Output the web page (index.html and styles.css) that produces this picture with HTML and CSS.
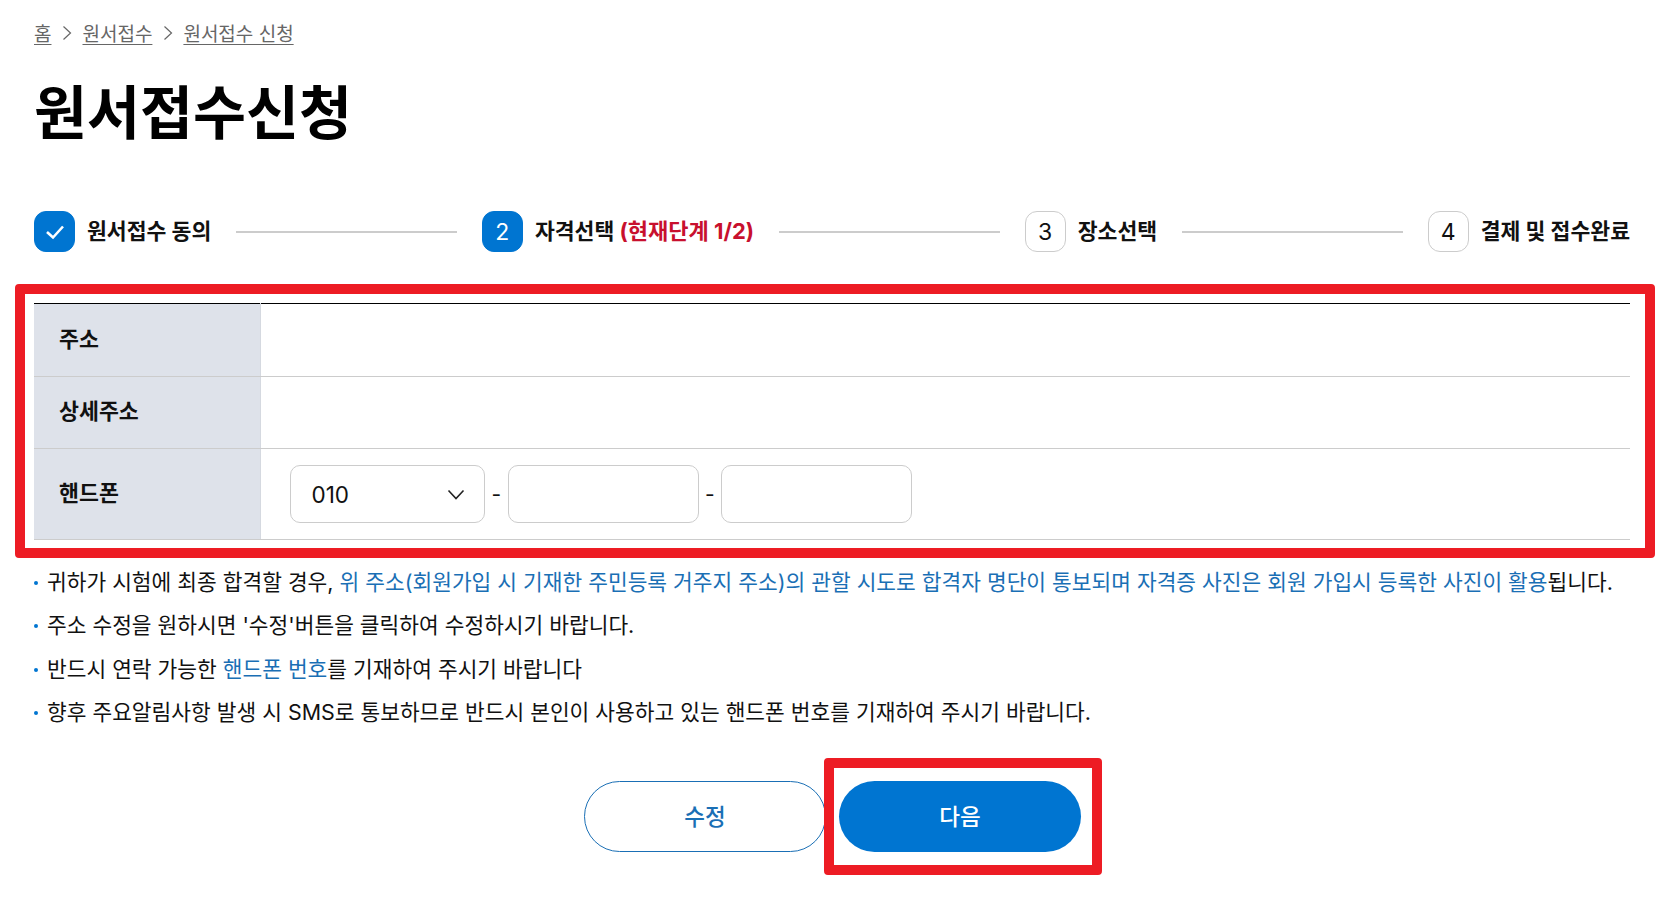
FILE: index.html
```html
<!DOCTYPE html>
<html lang="ko">
<head>
  <meta charset="UTF-8">
  <meta name="viewport" content="width=device-width, initial-scale=1.0">
  <title>원서접수신청</title>
  <link rel="stylesheet" href="styles.css">
</head>
<body>

  <div class="page">
    <!-- breadcrumb -->
    <nav class="breadcrumb">
      <a href="#">홈</a>
      <svg class="crumb-arrow" viewBox="0 0 10 16"><path d="M1.5 1.5 8.5 8 1.5 14.5"/></svg>
      <a href="#">원서접수</a>
      <svg class="crumb-arrow" viewBox="0 0 10 16"><path d="M1.5 1.5 8.5 8 1.5 14.5"/></svg>
      <a href="#">원서접수 신청</a>
    </nav>

    <h1>원서접수신청</h1>

    <!-- steps -->
    <div class="steps">
      <div class="step">
        <span class="step-num on">
          <svg viewBox="0 0 20 16"><path d="M2 8 8 13.5 18 2.5"/></svg>
        </span>
        <strong>원서접수 동의</strong>
      </div>
      <span class="step-line"></span>
      <div class="step">
        <span class="step-num on">2</span>
        <strong>자격선택 <em>(현재단계 1/2)</em></strong>
      </div>
      <span class="step-line"></span>
      <div class="step">
        <span class="step-num">3</span>
        <strong>장소선택</strong>
      </div>
      <span class="step-line"></span>
      <div class="step">
        <span class="step-num">4</span>
        <strong>결제 및 접수완료</strong>
      </div>
    </div>

    <!-- form table -->
    <table class="form-table">
      <tr class="row-addr">
        <th>주소</th>
        <td></td>
      </tr>
      <tr class="row-detail">
        <th>상세주소</th>
        <td></td>
      </tr>
      <tr class="row-phone">
        <th>핸드폰</th>
        <td>
          <div class="phone">
            <div class="select-wrap">
              <select>
                <option>010</option>
              </select>
              <svg class="select-arrow" viewBox="0 0 18 11"><path d="M1.5 1.5 9 9.5 16.5 1.5"/></svg>
            </div>
            <span class="dash">-</span>
            <input type="text">
            <span class="dash">-</span>
            <input type="text">
          </div>
        </td>
      </tr>
    </table>

    <ul class="notes">
      <li>귀하가 시험에 최종 합격할 경우, <span class="blue">위 주소(회원가입 시 기재한 주민등록 거주지 주소)의 관할 시도로 합격자 명단이 통보되며 자격증 사진은 회원 가입시 등록한 사진이 활용</span>됩니다.</li>
      <li>주소 수정을 원하시면 '수정'버튼을 클릭하여 수정하시기 바랍니다.</li>
      <li>반드시 연락 가능한 <span class="blue">핸드폰 번호</span>를 기재하여 주시기 바랍니다</li>
      <li>향후 주요알림사항 발생 시 SMS로 통보하므로 반드시 본인이 사용하고 있는 핸드폰 번호를 기재하여 주시기 바랍니다.</li>
    </ul>

    <div class="buttons">
      <button class="btn btn-line">수정</button>
      <button class="btn btn-fill">다음</button>
    </div>
  </div>

  <!-- red marks drawn over the page -->
  <div class="mark mark-table"></div>
  <div class="mark mark-next"></div>

</body>
</html>
```

FILE: styles.css
```css
* {
  box-sizing: border-box;
}

html, body {
  height: 100%;
}

body {
  margin: 0;
  background-color: #fff;
  color: #111;
  font-family: 'Inter', 'Noto Sans CJK KR', sans-serif;
  overflow: hidden;
  position: relative;
}

.page {
  padding: 18px 48px 0 34px;
}

.breadcrumb {
  display: flex;
  align-items: center;
  gap: 11px;
  height: 28px;
  font-size: 19px;
}

.breadcrumb a {
  color: #666;
  text-decoration: underline;
  text-underline-offset: 3px;
}

.crumb-arrow {
  width: 10px;
  height: 16px;
  margin: 1px -1px 0 0;
}

.crumb-arrow path {
  fill: none;
  stroke: #666;
  stroke-width: 1.2;
}

h1 {
  margin: 33px 0 0;
  font-size: 57.6px;
  font-weight: 700;
  line-height: 68px;
  color: #000;
}

.steps {
  display: flex;
  align-items: center;
  gap: 25px;
  margin-top: 64px;
}

.step {
  display: flex;
  align-items: center;
  gap: 12px;
  font-size: 21.6px;
  white-space: nowrap;
}

.step strong {
  padding-bottom: 5px;
  font-weight: 700;
}

.step em {
  font-size: 22px;
  font-style: normal;
  color: #c8102e;
}

.step-num {
  display: flex;
  justify-content: center;
  align-items: center;
  width: 41px;
  height: 41px;
  border: 1px solid #ccc;
  border-radius: 12px;
  font-size: 23px;
  font-weight: 400;
}

.step-num.on {
  border-color: #0075d1;
  background-color: #0075d1;
  color: #fff;
}

.step-num svg {
  width: 20px;
  height: 16px;
}

.step-num svg path {
  fill: none;
  stroke: #fff;
  stroke-width: 2.6;
}

.step-line {
  flex: 1;
  height: 2px;
  background-color: #ccc;
}

.form-table {
  width: 100%;
  margin-top: 51px;
  border-collapse: collapse;
  border-top: 1px solid #000;
  table-layout: fixed;
}

.form-table th,
.form-table td {
  padding: 0;
  border-bottom: 1px solid #ccc;
}

.form-table th {
  width: 226px;
  padding: 0 0 6px 25px;
  background-color: #dee2ea;
  border-right: 1px solid #d5d9e0;
  font-size: 21.7px;
  font-weight: 700;
  text-align: left;
}

.row-addr {
  height: 73px;
}

.row-detail {
  height: 72px;
}

.row-phone {
  height: 91px;
}

.phone {
  display: flex;
  align-items: center;
  padding-left: 29px;
}

.select-wrap {
  position: relative;
  width: 195px;
  height: 58px;
}

.select-wrap select {
  width: 100%;
  height: 100%;
  padding: 0 21px;
  border: 1px solid #ccc;
  border-radius: 10px;
  background-color: #fff;
  color: #111;
  font-family: inherit;
  font-size: 22.5px;
  appearance: none;
}

.select-arrow {
  position: absolute;
  top: 24px;
  right: 20px;
  width: 18px;
  height: 11px;
}

.select-arrow path {
  fill: none;
  stroke: #222;
  stroke-width: 1.6;
}

.phone input {
  width: 191px;
  height: 58px;
  border: 1px solid #ccc;
  border-radius: 10px;
  background-color: #fff;
}

.dash {
  width: 23.5px;
  text-align: center;
  font-size: 21px;
}

.phone input + .dash {
  width: 21.5px;
}

.notes {
  margin: 21px 0 0;
  padding: 0;
  list-style: none;
}

.notes li {
  position: relative;
  padding-left: 13px;
  height: 43.4px;
  line-height: 43.4px;
  font-size: 21.43px;
  white-space: nowrap;
}

.notes li::before {
  content: "";
  position: absolute;
  top: 20px;
  left: 0;
  width: 4px;
  height: 4px;
  border-radius: 50%;
  background-color: #0075d1;
}

.blue {
  color: #1a6fb5;
}

.buttons {
  display: flex;
  justify-content: center;
  gap: 13px;
  margin-top: 46px;
  padding-left: 1px;
}

.btn {
  width: 242px;
  height: 71px;
  padding-bottom: 3px;
  border-radius: 36px;
  font-family: inherit;
  font-size: 22.5px;
  font-weight: 500;
  cursor: pointer;
}

.btn-line {
  border: 1px solid #1a6fb5;
  background-color: #fff;
  color: #1a6fb5;
}

.btn-fill {
  border: none;
  background-color: #0075d1;
  color: #fff;
}

.mark {
  position: absolute;
  border: 10px solid #ed1c24;
  border-radius: 4px;
}

.mark-table {
  top: 284px;
  left: 15px;
  width: 1640px;
  height: 274px;
}

.mark-next {
  top: 758px;
  left: 824px;
  width: 278px;
  height: 117px;
}
```
